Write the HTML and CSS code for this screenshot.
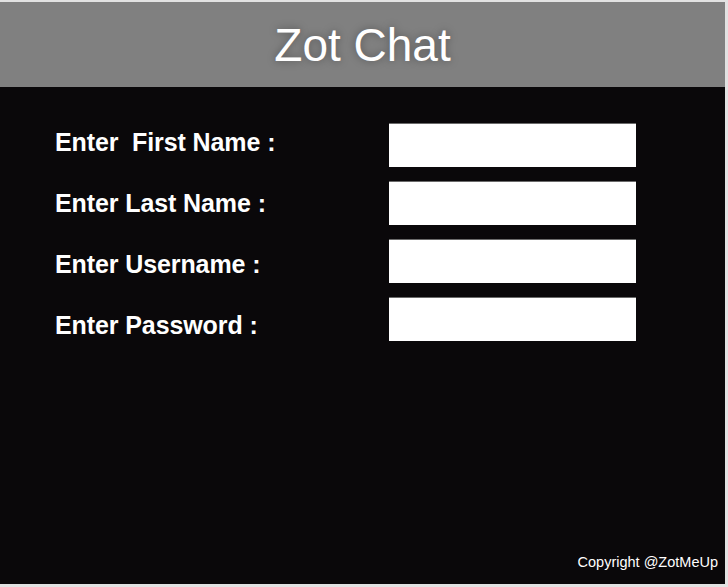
FILE: index.html
```html
<!DOCTYPE html>
<html>
<head>
<meta charset="utf-8">
<link rel="stylesheet" href="styles.css">
</head>
<body>
<div class="app">
  <header class="header">Zot Chat</header>
  <main class="main">
    <form class="form">
      <div class="labels">
        <label class="label">Enter &nbsp;First Name :</label>
        <label class="label">Enter Last Name :</label>
        <label class="label">Enter Username :</label>
        <label class="label">Enter Password :</label>
      </div>
      <div class="fields">
        <input class="field" type="text">
        <input class="field" type="text">
        <input class="field" type="text">
        <input class="field" type="password">
      </div>
    </form>
    <footer class="footer">Copyright @ZotMeUp</footer>
  </main>
</div>
</body>
</html>
```

FILE: styles.css
```css
html, body {
  margin: 0;
  padding: 0;
  background: #e2e2e2;
  font-family: "Liberation Sans", Arial, sans-serif;
}
.app {
  width: 725px;
  height: 582px;
  margin-top: 2px;
  display: flex;
  flex-direction: column;
  background: #0a080a;
}
.header {
  height: 85px;
  flex: none;
  background: #808080;
  color: #fff;
  font-size: 46px;
  display: flex;
  align-items: center;
  justify-content: center;
  text-shadow: 0 0 8px rgba(0, 0, 0, 0.35);
}
.main {
  flex: 1;
  display: flex;
  flex-direction: column;
  padding: 36px 7px 13px 55px;
}
.form {
  display: flex;
  margin: 0;
}
.labels {
  width: 334px;
  margin-top: 5px;
  display: flex;
  flex-direction: column;
  gap: 33px;
}
.label {
  color: #fff;
  font-size: 25px;
  font-weight: bold;
  line-height: 28px;
  letter-spacing: -0.1px;
  white-space: nowrap;
}
.fields {
  display: flex;
  flex-direction: column;
  gap: 14px;
}
.field {
  width: 247px;
  height: 44px;
  box-sizing: border-box;
  border: none;
  border-top: 1px solid #6a6a6a;
  background: #fff;
  margin: 0;
  padding: 0 6px;
  outline: none;
}
.footer {
  margin-top: auto;
  align-self: flex-end;
  color: #fff;
  font-size: 14.5px;
  line-height: 17px;
}
```
